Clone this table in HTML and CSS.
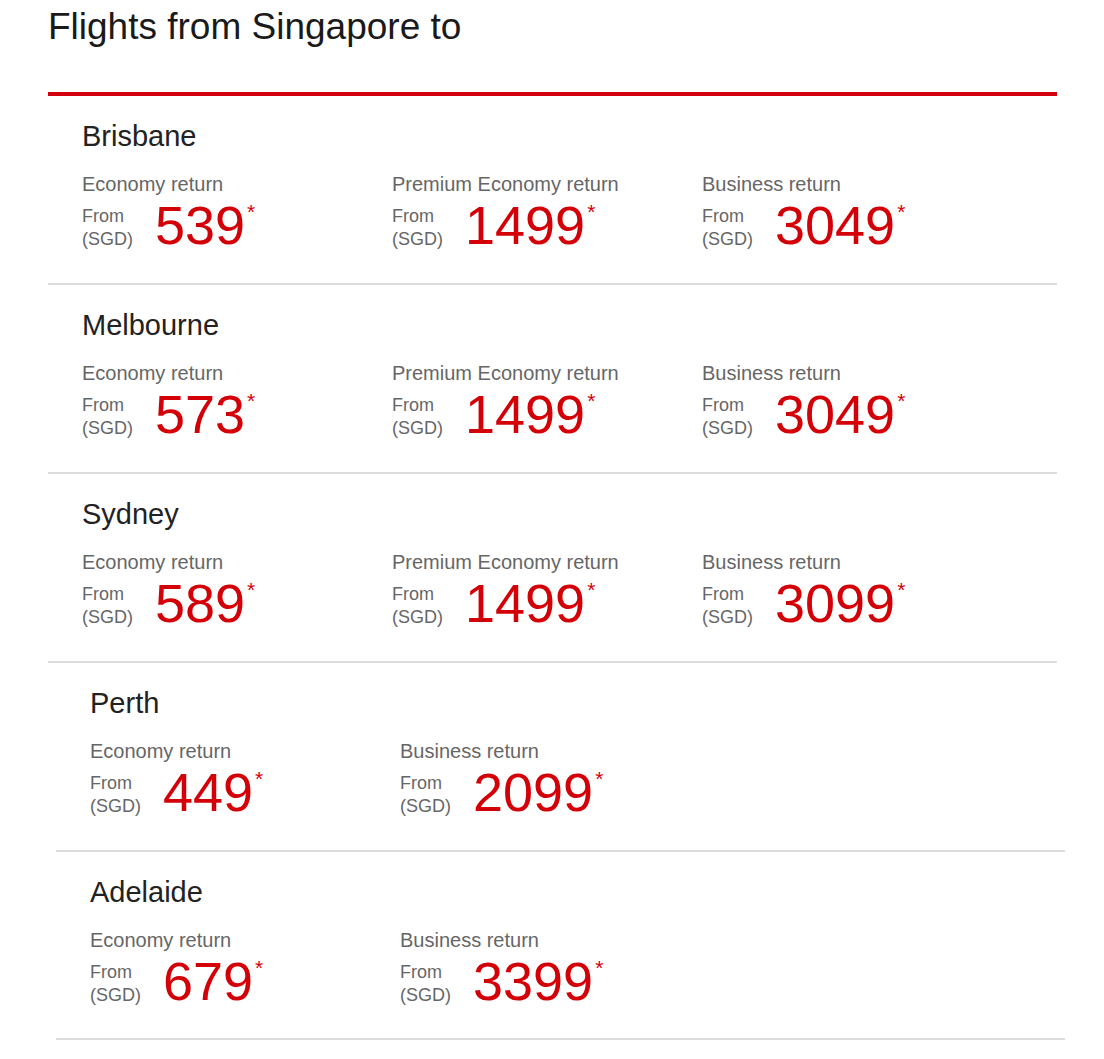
FILE: index.html
```html
<!DOCTYPE html>
<html>
<head>
<meta charset="utf-8">
<link rel="stylesheet" href="styles.css">
</head>
<body>
<div class="page">
  <h1 class="title">Flights from Singapore to</h1>
  <div class="redline"></div>

  <div class="row">
    <div class="city">Brisbane</div>
    <div class="fares">
      <div class="fare"><div class="label">Economy return</div><div class="pricebox"><div class="from">From<br>(SGD)</div><div class="price">539<span class="ast">*</span></div></div></div>
      <div class="fare"><div class="label">Premium Economy return</div><div class="pricebox"><div class="from">From<br>(SGD)</div><div class="price">1499<span class="ast">*</span></div></div></div>
      <div class="fare"><div class="label">Business return</div><div class="pricebox"><div class="from">From<br>(SGD)</div><div class="price">3049<span class="ast">*</span></div></div></div>
    </div>
  </div>

  <div class="row">
    <div class="city">Melbourne</div>
    <div class="fares">
      <div class="fare"><div class="label">Economy return</div><div class="pricebox"><div class="from">From<br>(SGD)</div><div class="price">573<span class="ast">*</span></div></div></div>
      <div class="fare"><div class="label">Premium Economy return</div><div class="pricebox"><div class="from">From<br>(SGD)</div><div class="price">1499<span class="ast">*</span></div></div></div>
      <div class="fare"><div class="label">Business return</div><div class="pricebox"><div class="from">From<br>(SGD)</div><div class="price">3049<span class="ast">*</span></div></div></div>
    </div>
  </div>

  <div class="row">
    <div class="city">Sydney</div>
    <div class="fares">
      <div class="fare"><div class="label">Economy return</div><div class="pricebox"><div class="from">From<br>(SGD)</div><div class="price">589<span class="ast">*</span></div></div></div>
      <div class="fare"><div class="label">Premium Economy return</div><div class="pricebox"><div class="from">From<br>(SGD)</div><div class="price">1499<span class="ast">*</span></div></div></div>
      <div class="fare"><div class="label">Business return</div><div class="pricebox"><div class="from">From<br>(SGD)</div><div class="price">3099<span class="ast">*</span></div></div></div>
    </div>
  </div>

  <div class="row shifted">
    <div class="city">Perth</div>
    <div class="fares">
      <div class="fare"><div class="label">Economy return</div><div class="pricebox"><div class="from">From<br>(SGD)</div><div class="price">449<span class="ast">*</span></div></div></div>
      <div class="fare"><div class="label">Business return</div><div class="pricebox"><div class="from">From<br>(SGD)</div><div class="price">2099<span class="ast">*</span></div></div></div>
    </div>
  </div>

  <div class="row shifted">
    <div class="city">Adelaide</div>
    <div class="fares">
      <div class="fare"><div class="label">Economy return</div><div class="pricebox"><div class="from">From<br>(SGD)</div><div class="price">679<span class="ast">*</span></div></div></div>
      <div class="fare"><div class="label">Business return</div><div class="pricebox"><div class="from">From<br>(SGD)</div><div class="price">3399<span class="ast">*</span></div></div></div>
    </div>
  </div>
</div>
</body>
</html>
```

FILE: styles.css
```css
html, body {
  margin: 0;
  padding: 0;
  background: #ffffff;
}

body {
  font-family: "Liberation Sans", Arial, sans-serif;
}

.page {
  width: 1009px;
  padding-left: 48px;
}

.title {
  margin: 5px 0 0 0;
  font-size: 37px;
  line-height: 44px;
  font-weight: normal;
  color: #1a1a1a;
}

.redline {
  margin-top: 43px;
  height: 4px;
  background: #d0000f;
}

.row {
  padding: 23px 0 32px 34px;
  border-bottom: 2px solid #dcdcdc;
}

.row.shifted {
  margin-left: 8px;
  margin-right: -8px;
}

.row.shifted:last-child {
  padding-bottom: 31px;
}

.city {
  font-size: 29px;
  line-height: 34px;
  color: #222222;
}

.fares {
  display: flex;
  margin-top: 19px;
}

.fare {
  width: 310px;
}

.label {
  font-size: 20px;
  line-height: 24px;
  color: #666666;
}

.pricebox {
  display: flex;
  align-items: flex-start;
  margin-top: 9px;
}

.from {
  font-size: 18px;
  line-height: 23px;
  color: #666666;
  width: 73px;
}

.price {
  font-size: 54px;
  line-height: 41px;
  color: #d30008;
  display: flex;
  align-items: flex-start;
}

.ast {
  font-size: 21px;
  line-height: 20px;
  margin-left: 2px;
  margin-top: -3px;
}
```
